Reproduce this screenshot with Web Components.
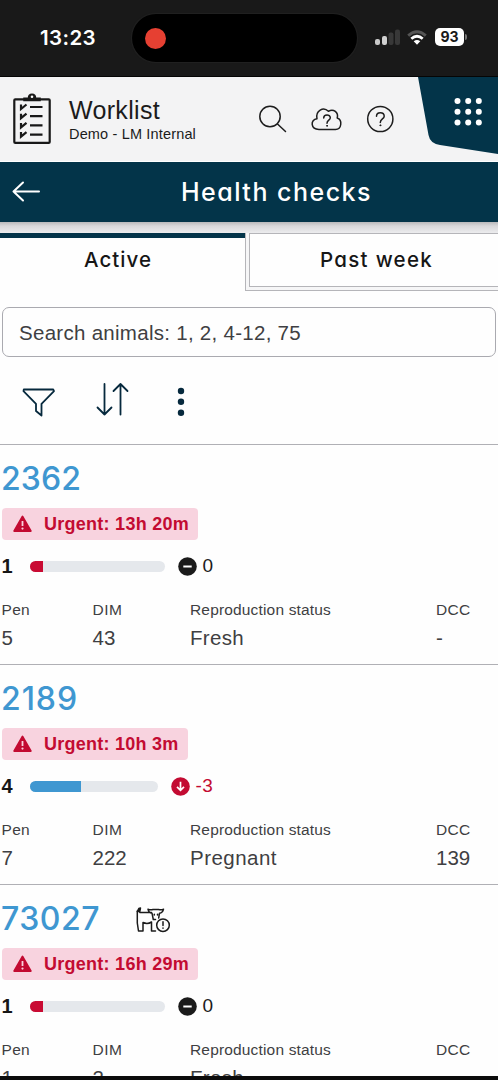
<!DOCTYPE html>
<html lang="en">
<head>
<meta charset="utf-8">
<title>Health checks</title>
<style>
html,body{margin:0;height:1080px;overflow:hidden;background:#fefefe}
body{font-family:"Liberation Sans",Arial,sans-serif;color:#1b1b1b}
</style>
</head>
<body>
<worklist-app></worklist-app>
<script>
const define = (name, html, init) => customElements.define(name, class extends HTMLElement {
  connectedCallback() {
    if (this.shadowRoot) return;
    const t = document.createElement('template');
    t.innerHTML = typeof html === 'function' ? html(this) : html;
    this.attachShadow({mode: 'open'}).append(t.content.cloneNode(true));
    if (init) init(this);
  }
});

/* One line of text tracked to a given advance width */
define('fit-text', `<style>:host{display:block;white-space:nowrap;flex:none}span{display:inline-block}</style><span><slot></slot></span>`, el => {
  const target = parseFloat(el.getAttribute('w'));
  if (!target) return;
  const s = el.shadowRoot.querySelector('span');
  const natural = s.getBoundingClientRect().width;
  s.style.letterSpacing = ((target - natural) / Math.max(1, el.textContent.length)) + 'px';
});

define('status-bar', `<style>
:host{display:flex;height:77px;box-sizing:border-box;background:#191919;border-bottom:1px solid #050505;color:#fff;font-family:Inter,sans-serif;flex:none}
fit-text{margin-left:40px;width:92px;font-size:20.5px;font-weight:600;line-height:76px}
.island{width:225px;height:48px;border-radius:24px;background:#000;margin-top:14px;box-shadow:0 0 1px 1px #222;display:flex;align-items:center}
.island i{width:21px;height:21px;border-radius:50%;background:#e64032;margin-left:13px}
svg{margin:24px 0 0 13px}
.bat{margin:28px 0 0 5px;width:29px;height:18px;border-radius:5px;background:#fff;color:#191919;font-size:14px;font-weight:700;line-height:18px;text-align:center}
.cap{width:2px;height:6px;margin:34px 0 0 1px;border-radius:0 2px 2px 0;background:#777}
</style>
<fit-text w="56">13:23</fit-text><div class="island"><i></i></div>
<svg width="60" height="28"><g><rect x="5" y="15" width="5" height="6" rx="2" fill="#c9c9c9"/><rect x="12" y="12" width="5" height="9" rx="2" fill="#d0d0d0"/><rect x="18.500" y="8.500" width="5" height="12.500" rx="2" fill="#383838"/><rect x="25" y="5.500" width="5" height="15.500" rx="2" fill="#383838"/></g>
<g fill="none" stroke-width="2.800"><path d="M38.200 11.600Q47 3.800 55.800 11.600" stroke="#555"/><path d="M41.300 14.800Q47 9.800 52.700 14.800" stroke="#fff"/></g><path d="M43.700 17.200Q47 14.700 50.300 17.200L47 20.700Z" fill="#fff"/></svg>
<div class="bat">93</div><div class="cap"></div>`);

define('app-header', `<style>
:host{display:flex;height:85px;background:#f3f3f4;flex:none;box-sizing:border-box;border-bottom:1px solid #fff}
svg{display:block;flex:none}
.clip{margin:15px 0 0 12px}
.name{margin:18px 0 0 17px;width:190px}
.name fit-text:first-child{font-size:25px;line-height:30px}
.name fit-text:last-child{font-size:14.500px;line-height:19px}
.tools{margin-top:28px}
.menu{margin-left:auto}
</style>
<svg class="clip" width="40" height="54" fill="none" stroke="#181818" stroke-width="2.200"><rect x="2.300" y="7.300" width="35.400" height="43.600" rx="1"/><path d="M12 8.500V6.200H16.500C16.500 1 23.500 1 23.500 6.200H28V8.500Z" fill="#181818" stroke-width="1.500"/><circle cx="20" cy="4.700" r="1.300" fill="#fff" stroke="none"/><path d="M18 15H30.500M18 24.200H30.500M18 33.400H30.500M18 42.600H30.500M9 12.500V17L14.500 12.500M9 21.700V26.200L14.500 21.700M9 30.900V35.400L14.500 30.900M9 40.100V44.600L14.500 40.100"/></svg>
<div class="name"><fit-text w="91">Worklist</fit-text><fit-text w="127">Demo - LM Internal</fit-text></div>
<svg class="tools" width="138" height="30" fill="none" stroke="#1d1d1d" stroke-width="1.500" stroke-linecap="round" stroke-linejoin="round"><circle cx="11" cy="11.500" r="10.200"/><path d="M18.500 19L26.500 26.500"/>
<path d="M60 24.500C51.500 24.500 51 14.600 58 13.800C56.200 5.500 64.500 1.200 69.400 6.300C74.500 3.200 79.800 7.500 78.200 13C83.800 15 82.600 24.500 76.500 24.500Z"/><path d="M64.700 13C64.700 8.800 71.300 9 71.300 12.700C71.300 15.200 68 15.200 68 18.200"/><circle cx="68" cy="20.800" r=".5" fill="#1d1d1d" stroke-width="1"/>
<circle cx="121.300" cy="14" r="12.600"/><path d="M117.500 11.300C117.500 6.500 125.200 6.600 125.200 11.200C125.200 14 121.300 14 121.300 17.500"/><circle cx="121.300" cy="20.300" r=".5" fill="#1d1d1d" stroke-width="1"/></svg>
<svg class="menu" width="80" height="84"><path d="M0 0H80V77L22 68Q12 66.500 10.500 58Z" fill="#033449"/><g fill="#fff"><circle cx="39.500" cy="24" r="3"/><circle cx="50.200" cy="24" r="3"/><circle cx="60.800" cy="24" r="3"/><circle cx="39.500" cy="34.800" r="3"/><circle cx="50.200" cy="34.800" r="3"/><circle cx="60.800" cy="34.800" r="3"/><circle cx="39.500" cy="45.500" r="3"/><circle cx="50.200" cy="45.500" r="3"/><circle cx="60.800" cy="45.500" r="3"/></g></svg>`);

define('page-title', `<style>
:host{display:flex;flex:none;height:60px;background:#033449;color:#fff;font:500 25px/60px Inter,sans-serif;font-feature-settings:"cv11"}
svg{margin:18px 0 0 12px;width:168px;flex:none}
fit-text{margin-left:1px}
</style><svg width="168" height="24" fill="none" stroke="#fff" stroke-width="2" stroke-linecap="round" stroke-linejoin="round"><path d="M27 11.500H1.500M11 2.500L1.500 11.500L11 20.500"/></svg><fit-text w="191">Health checks</fit-text>`);

define('tab-strip', `<style>
:host{display:flex;flex:none;height:69px;padding-top:11px;box-sizing:border-box;background:linear-gradient(#b9b9bb 0,#d8d8da 4px,#ececee 11px,#fefefe 11px);font:500 20.500px/20px Inter,sans-serif;font-feature-settings:"cv11";color:#161616}
.on{width:245px;box-sizing:border-box;border-top:5px solid #033449;padding:12px 0 0 84px}
.off{flex:1;height:58px;box-sizing:border-box;border:solid #b5b5b9;border-width:0 0 1px 1px;padding:0 0 3px 3px;background:#f6f6f7}
.off div{height:54px;box-sizing:border-box;border:1px solid #b5b5b9;border-right:0;background:#fefefe;padding:16px 0 0 70px}
</style><div class="on"><fit-text w="68">Active</fit-text></div><div class="off"><div><fit-text w="113">Past week</fit-text></div></div>`);

define('search-field', `<style>
:host{display:block;flex:none;box-sizing:border-box;height:50px;margin:16px 2px 0;border:1px solid #aaaab0;border-radius:7px;padding-left:16px;font-size:20.500px;line-height:49px;color:#3f3f42}
</style><fit-text w="282">Search animals: 1, 2, 4-12, 75</fit-text>`);

define('list-tools', `<style>
:host{display:block;flex:none;height:87px}svg{display:block}
</style><svg width="210" height="87" fill="none" stroke="#06293d" stroke-width="1.800" stroke-linejoin="round" stroke-linecap="round"><path d="M23.800 32.500H53.200L54 34.200L41.500 46.800V58.500L36 54V46.800L23.500 34.200Z"/><path d="M104.500 27V57.500M97.500 50.500L104.500 57.500L111.500 50.500M120.500 57.500V27M113.500 34L120.500 27L127.500 34"/><g fill="#06293d" stroke="none"><circle cx="181" cy="34" r="3.200"/><circle cx="181" cy="44.700" r="3.200"/><circle cx="181" cy="55.700" r="3.200"/></g></svg>`);

define('urgent-badge', `<style>
:host{display:flex;width:max-content;height:32px;box-sizing:border-box;margin:11px 0 0 2px;padding:0 9px 0 11px;border-radius:4px;background:#f8d3df;color:#c30b32;font-weight:700;font-size:18px;line-height:33px}
svg{margin:7px 12px 0 0}
</style><svg width="19" height="18"><path d="M9.500 1.500L17.800 16H1.200Z" fill="#c30b32" stroke="#c30b32" stroke-width="1.800" stroke-linejoin="round"/><path d="M9.500 6V11" stroke="#f8d3df" stroke-width="1.800"/><circle cx="9.500" cy="13.600" r="1.100" fill="#f8d3df"/></svg><slot></slot>`);

define('score-row', el => {
  const a = n => el.getAttribute(n), down = a('trend') === 'down';
  return `<style>
:host{display:flex;align-items:center;height:20px;width:212px;margin:16px 0 0 1.500px;line-height:20px;font-size:19px;color:${down ? '#c30b32' : '#1b1b1b'}}
b{width:28.500px;font-size:20px;color:#161616}
.bar{flex:1;height:11px;border-radius:6px;overflow:hidden;background:#e5e8ec}
.bar i{display:block;height:100%;width:${a('fill')}px;background:${down ? '#3f97d1' : '#c90b33'}}
svg{margin:0 ${down ? 6 : 6}px 0 13px}
</style><b>${a('value')}</b><div class="bar"><i></i></div>
<svg width="19" height="19"><circle cx="9.500" cy="9.500" r="9.300" fill="${down ? '#c30b32' : '#1b1b1b'}"/>${down
  ? '<path d="M9.500 4.800V13M6 9.800L9.500 13.300L13 9.800" fill="none" stroke="#fff" stroke-width="1.700"/>'
  : '<path d="M5.300 9.500H13.700" stroke="#fff" stroke-width="2"/>'}</svg><fit-text w="${down ? 18 : 11}">${a('delta')}</fit-text>`;
});

define('stat-cell', `<style>
:host{display:block;color:#3f3f42}
.l{font-size:15.500px;line-height:20px}.v{font-size:20.500px;line-height:24px;margin-top:6px}
</style><div class="l"><slot name="label"></slot></div><div class="v"><slot></slot></div>`);

define('animal-card', el => {
  const a = n => el.getAttribute(n);
  return `<style>
:host{display:block;flex:none;height:220px;box-sizing:border-box;border-top:1px solid #b0b0b5;padding-top:15px}
.id{display:flex;height:48px;margin-bottom:-11px;font:500 32px/37px Inter,sans-serif;color:#3f97d1;padding-left:1px}
.id svg{margin:7px 0 0 auto}.id{width:170px}
.stats{display:grid;grid-template-columns:91px 97.500px 246px 1fr;padding-left:1.500px;margin-top:24px}
</style>
<div class="id"><fit-text w="${a('idw')}">${a('animal')}</fit-text>${a('alert') === null ? '' : `<svg width="36" height="26" fill="none" stroke="#1b1b1b" stroke-width="1.500" stroke-linejoin="round" stroke-linecap="round"><path d="M3.800 1.500L5.500 .9L4.800 4.500H2.300Z" fill="#1b1b1b"/><path d="M2.300 4V16L3.500 24H8V15.500Q12.500 17.500 16.500 15V24H20.500M4.800 5.500H16.500M13 2.200Q15.500 3.300 18 2.500H23.500Q26.500 3.300 28.500 2.200Q27.700 6 24.500 6.200L23.700 11M13 2.200Q13.700 6 17 6.200L18.300 12.500H20.500M19.300 7.200V8M22.500 7.200V8"/><circle cx="28" cy="18.200" r="6.300" fill="#fefefe"/><path d="M28 14.800V18.500M28 21V21.300"/></svg>`}</div>
<urgent-badge><fit-text w="${a('urgentw')}">Urgent: ${a('urgent')}</fit-text></urgent-badge>
<score-row value="${a('score')}" fill="${a('fill')}" trend="${a('trend')}" delta="${a('delta')}"></score-row>
<div class="stats">
<stat-cell><fit-text slot="label" w="28.500">Pen</fit-text>${a('pen')}</stat-cell>
<stat-cell><fit-text slot="label" w="30">DIM</fit-text>${a('dim')}</stat-cell>
<stat-cell><fit-text slot="label" w="141">Reproduction status</fit-text><fit-text w="${a('reprow')}">${a('repro')}</fit-text></stat-cell>
<stat-cell><fit-text slot="label" w="34.500">DCC</fit-text>${a('dcc')}</stat-cell>
</div>`;
});

define('worklist-app', `<style>
:host{display:flex;flex-direction:column;height:1076px;overflow:hidden;border-bottom:4px solid #0c0c0c;background:#fefefe}
</style>
<status-bar></status-bar><app-header></app-header><page-title></page-title><tab-strip></tab-strip>
<search-field></search-field><list-tools></list-tools>
<animal-card animal="2362" idw="80" urgent="13h 20m" urgentw="145" score="1" fill="13" trend="flat" delta="0" pen="5" dim="43" repro="Fresh" reprow="54" dcc="-"></animal-card>
<animal-card animal="2189" idw="77" urgent="10h 3m" urgentw="134.500" score="4" fill="51" trend="down" delta="-3" pen="7" dim="222" repro="Pregnant" reprow="87" dcc="139"></animal-card>
<animal-card animal="73027" idw="99" alert urgent="16h 29m" urgentw="145" score="1" fill="13" trend="flat" delta="0" pen="1" dim="2" repro="Fresh" reprow="54" dcc=""></animal-card>`);
</script>
</body>
</html>
